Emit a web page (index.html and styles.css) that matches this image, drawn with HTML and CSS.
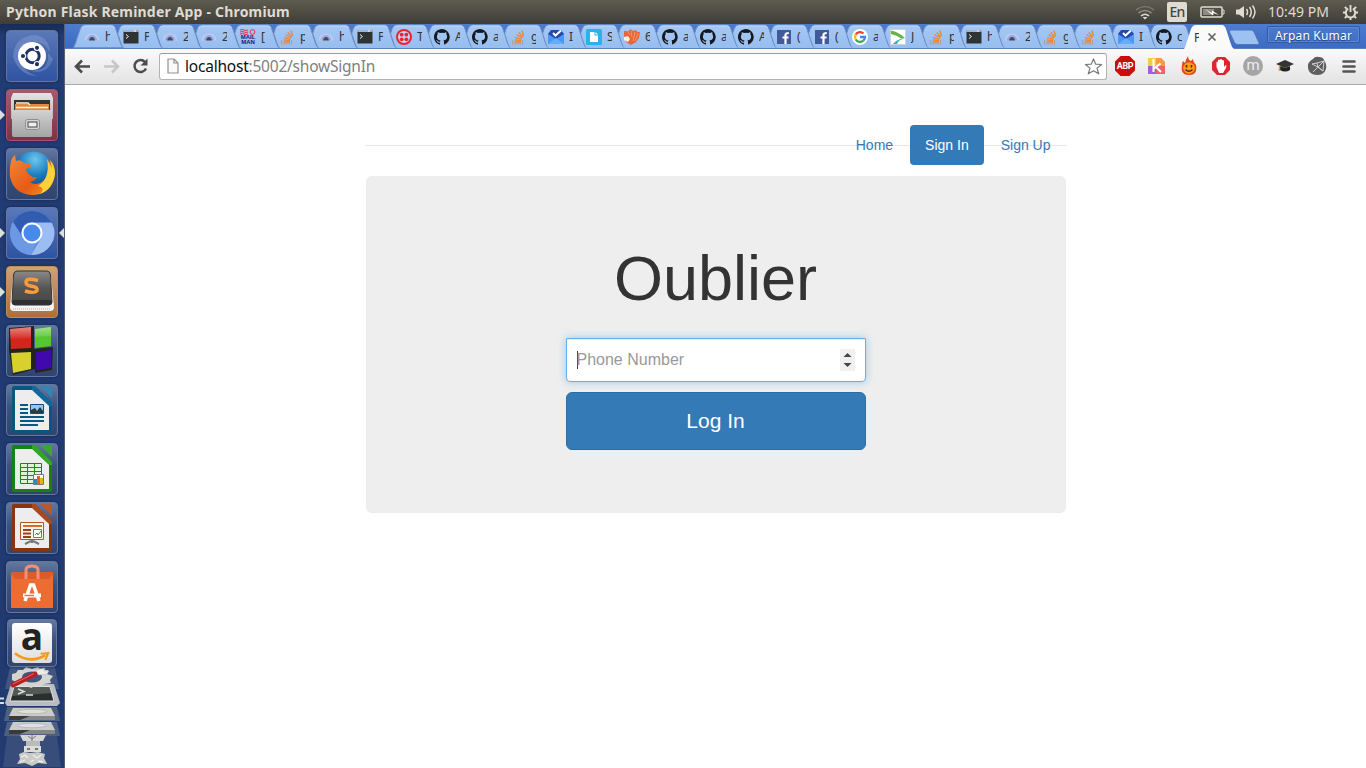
FILE: index.html
```html
<!DOCTYPE html>
<html lang="en">
<head>
<meta charset="utf-8">
<title>Python Flask Reminder App</title>
<link rel="stylesheet" href="styles.css">
</head>
<body>
<svg class="defs" width="0" height="0">
  <defs>
    <linearGradient id="tabfill" gradientUnits="userSpaceOnUse" x1="0" y1="0" x2="0" y2="24"><stop offset="0" stop-color="#a6c8f5"/><stop offset="1" stop-color="#97beef"/></linearGradient>
    <linearGradient id="gloss" x1="0" y1="0" x2="0" y2="1"><stop offset="0" stop-color="#fff" stop-opacity=".45"/><stop offset="1" stop-color="#fff" stop-opacity="0"/></linearGradient>
    <linearGradient id="metal" x1="0" y1="0" x2="0" y2="1"><stop offset="0" stop-color="#d2d2d2"/><stop offset="1" stop-color="#a4a4a4"/></linearGradient>
    <linearGradient id="lid" x1="0" y1="0" x2="0" y2="1"><stop offset="0" stop-color="#e4e4e4"/><stop offset="1" stop-color="#b4b4b4"/></linearGradient>
    <linearGradient id="dark" x1="0" y1="0" x2="0" y2="1"><stop offset="0" stop-color="#8a8a8a"/><stop offset=".5" stop-color="#555"/><stop offset="1" stop-color="#444"/></linearGradient>
    <linearGradient id="fox" x1="0" y1="0" x2="1" y2="1"><stop offset="0" stop-color="#f0883a"/><stop offset=".6" stop-color="#e85a16"/><stop offset="1" stop-color="#f4a31c"/></linearGradient>
    <radialGradient id="globe" cx=".55" cy=".2" r=".8"><stop offset="0" stop-color="#6cc8ee"/><stop offset=".5" stop-color="#1a79bd"/><stop offset="1" stop-color="#123a78"/></radialGradient>
    <symbol id="shape" viewBox="0 0 50 24" preserveAspectRatio="none"><path d="M.5 23.5Q1.500 22 2.500 19L7 5Q8.500 1 12 1H38Q40.500 1 42 5L46.500 19Q47.500 22 49 23.500Z" fill="url(#tabfill)"/><path d="M.5 23.5Q1.500 22 2.500 19L7 5Q8.500 1 12 1H38Q40.500 1 42 5L46.500 19Q47.500 22 49 23.500" fill="none" stroke="#6f8fbd"/><path d="M9 3.500Q10 2 12 2H38Q39.500 2 40.500 4" fill="none" stroke="#bdd7f9"/></symbol>
    <symbol id="next" viewBox="0 0 50 24" preserveAspectRatio="none"><path d="M5.500 10L7 5Q8.500 1 12 1H38Q40.500 1 42 5L46.500 19Q47.500 22 49 23.500V24H11.500Q10 22 9 19L6.300 10.500Z" fill="url(#tabfill)"/><path d="M5.500 10L7 5Q8.500 1 12 1H38Q40.500 1 42 5L46.500 19Q47.500 22 49 23.500" fill="none" stroke="#6f8fbd"/><path d="M9 3.500Q10 2 12 2H38Q39.500 2 40.500 4" fill="none" stroke="#bdd7f9"/></symbol>
    <symbol id="eye" viewBox="0 0 16 16"><path d="M.5 11.500Q1 4.500 8 4.500T15.500 11.500Q8 12.500 .5 11.500Z" fill="#bccaf0"/><path d="M2.500 11.500Q4 6 8 6T13.500 11.500Z" fill="#9aa9d8"/><path d="M5 11.500Q5.500 8 8 8T11 11.500Z" fill="#434b6b"/></symbol>
    <symbol id="term" viewBox="0 0 16 16"><rect x=".5" y="1" width="15" height="13.500" fill="#303334"/><path d="M.5 2H15.500" stroke="#c5d9ea" stroke-width="2"/><path d="M1 2H11" stroke="#6b93c6"/><path d="M13 2H15" stroke="#d24b38"/><path d="M3 5.500L5.500 7.500L3 9.500" fill="none" stroke="#eee"/></symbol>
    <symbol id="stack" viewBox="0 0 16 16"><path d="M2.500 11V15H12.500V11" fill="none" stroke="#a3a5ad" stroke-width="1.200"/><path d="M4.500 13H11M4.700 10.800L11 11.600M5.200 8.300L11.500 10.300M6.600 5.500L12 9M8.800 3.300L12.800 8.100M12 1.500L13.600 7" stroke="#ee8430" stroke-width="1.300"/></symbol>
    <symbol id="github" viewBox="0 0 16 16"><path fill="#15191d" d="M8 0C3.580 0 0 3.580 0 8c0 3.540 2.290 6.530 5.470 7.590.4.070.55-.17.55-.38V13.720c-2.230.48-2.700-1.070-2.700-1.070-.36-.92-.89-1.170-.89-1.170-.73-.5.050-.49.050-.49.810.060 1.230.83 1.230.83.72 1.230 1.880.87 2.330.66.070-.52.280-.87.510-1.070-1.780-.2-3.640-.89-3.640-3.950 0-.87.310-1.590.82-2.150-.08-.2-.36-1.020.080-2.120 0 0 .67-.21 2.200.82a7.600 7.600 0 0 1 4 0c1.530-1.040 2.200-.82 2.200-.82.440 1.100.16 1.920.080 2.120.51.560.82 1.270.82 2.150 0 3.070-1.870 3.750-3.650 3.950.29.250.54.730.54 1.480v2.200c0 .21.15.46.55.38A8 8 0 0 0 8 0Z"/></symbol>
    <symbol id="twilio" viewBox="0 0 16 16"><circle cx="8" cy="8" r="7" fill="#fff" fill-opacity=".35" stroke="#e9232f" stroke-width="2"/><g fill="#e9232f"><circle cx="5.700" cy="5.700" r="1.900"/><circle cx="10.300" cy="5.700" r="1.900"/><circle cx="5.700" cy="10.300" r="1.900"/><circle cx="10.300" cy="10.300" r="1.900"/></g></symbol>
    <symbol id="inbox" viewBox="0 0 16 16"><path d="M0 5L3 1H13L16 5V10H0Z" fill="#234aaa"/><path d="M0 5L8 10L16 5V15H0Z" fill="#4897f4"/><path d="M0 15L8 9L16 15Z" fill="#65adf9"/><path d="M5 4L7.500 6.500L13 1.500" fill="none" stroke="#fff" stroke-width="2"/></symbol>
    <symbol id="page" viewBox="0 0 16 16"><rect width="16" height="16" rx="1.500" fill="#26b4e9"/><path d="M4 3H8.500V6.500H12V13H4Z" fill="#fff"/><path d="M9.500 3L12 5.500H9.500Z" fill="#fff"/></symbol>
    <symbol id="hand" viewBox="0 0 16 16"><path d="M0 2L5 2L6 0L9 2L12 1L13 3L16 3L15 9L12 13L7 16L2 13L0 8Z" fill="#e76739"/><path d="M0 8L4 7L6 10L4 13L0 11Z" fill="#fff0e8"/><path d="M3 2L6 6M7 2L8 8M11 3L9 12M14 4L11 12" stroke="#f5a27c" stroke-width=".8"/></symbol>
    <symbol id="fb" viewBox="0 0 16 16"><rect x="1" y="1" width="14" height="14" fill="#42599a"/><path d="M9.500 15V6Q9.500 4 12.800 4M6.500 8.500H12.500" fill="none" stroke="#fff" stroke-width="2.200"/></symbol>
    <symbol id="google" viewBox="0 0 16 16"><circle cx="8" cy="8" r="8" fill="#fff"/><g fill="none" stroke-width="2.300"><path d="M11.500 4.500A5 5 0 0 0 3.700 5.500" stroke="#ea4335"/><path d="M3.700 5.500A5 5 0 0 0 3.700 10.500" stroke="#fbbc05"/><path d="M3.700 10.500A5 5 0 0 0 11.500 11.500" stroke="#34a853"/><path d="M11.500 11.500Q13 10 13 8H8" stroke="#4285f4"/></g></symbol>
    <symbol id="leaf" viewBox="0 0 16 16"><path d="M.5.5H15.500V15.500H.5Z" fill="#fff" stroke="#cbd3d8"/><path d="M1 1.500Q9 3 15 9L11 9.500Q7 6 1 5Z" fill="#69b541"/><path d="M15 9Q7 10 3 15H7Q8 11 15 9Z" fill="#31aeb9"/></symbol>
  </defs>
</svg>

<header class="panel">
  <div class="panel-title">Python Flask Reminder App - Chromium</div>
  <div class="indicators">
    <svg width="20" height="16" viewBox="0 0 20 16" fill="none" stroke="#aaa79f" stroke-width="1.600"><path d="M1 6Q10-1 19 6" stroke="#77756e"/><path d="M3.500 9Q10 4 16.500 9" stroke="#8f8d85"/><path d="M6 12Q10 8.500 14 12" stroke="#dfdbd2"/><path d="M7.500 13H12.500L10 15.500Z" fill="#dfdbd2" stroke="none"/></svg>
    <span class="lang">En</span>
    <svg width="25" height="14" viewBox="0 0 25 14"><rect x="1" y="2" width="21" height="10" rx="1" fill="none" stroke="#dfdbd2" stroke-width="1.500"/><path d="M22.500 5H24V9H22.500" fill="none" stroke="#dfdbd2"/><path d="M3 4H14V10H3Z" fill="#8d8b83"/><path d="M5 4L12 8V5.500L19 10L13 8V10.500Z" fill="#fff"/></svg>
    <svg class="sound" width="20" height="16" viewBox="0 0 20 16" fill="none" stroke="#dfdbd2" stroke-width="1.500"><path d="M0 5.500H3L8 2V14L3 10.500H0Z" fill="#dfdbd2" stroke="none"/><path d="M10.500 5Q12.500 8 10.500 11M13.500 3Q17 8 13.500 13M16.500 1.500Q21.500 8 16.500 14.500"/></svg>
    <span class="clock">10:49 PM</span>
    <svg class="gear" width="17" height="17" viewBox="0 0 18 18" fill="none" stroke="#dfdbd2"><path d="M6.500 5A5 5 0 1 0 11.500 5" stroke-width="2.200"/><path d="M9 1V8.500" stroke-width="2"/><path d="M9 14V17M1 9H4M14 9H17M3 15L5 13M13 13L15 15M3 3L5 5M13 5L15 3" stroke-width="2"/></svg>
  </div>
</header>

<div class="desktop">
<nav class="launcher">
  <div class="tile ubuntu"><svg viewBox="0 0 52 52"><path d="M7 27Q8 7 28 5Q43 6 44 23Q39 10 24 12Q14 16 15 29Q17 42 31 46Q13 45 7 27Z" fill="#8ba0d2" opacity=".45"/><path d="M47 29Q40 47 23 40Q44 43 42 23Z" fill="#8ba0d2" opacity=".4"/><circle cx="26" cy="26" r="14" fill="#fff"/><circle cx="26.500" cy="26" r="6.700" fill="none" stroke="#203361" stroke-width="3"/><g fill="#203361" stroke="#fff" stroke-width="1.200"><circle cx="17" cy="26" r="2.700"/><circle cx="31" cy="17.800" r="2.700"/><circle cx="31" cy="34.200" r="2.700"/></g></svg></div>
  <div class="tile files has-left"><svg viewBox="0 0 52 52"><path d="M7 4H45L47 9V30H5V9Z" fill="url(#lid)"/><path d="M8 11H44V23H8Z" fill="#343434"/><path d="M9 15H43V23H9Z" fill="#df8b3f"/><path d="M10 14H22L24 16M10 18.500H42" fill="none" stroke="#fff3d8" stroke-width="1.300"/><path d="M6 21H46V46Q46 48 44 48H8Q6 48 6 46Z" fill="url(#metal)"/><rect x="19.500" y="30.500" width="14" height="10" rx="2" fill="#d5d5d5" stroke="#8d8d8d"/><rect x="22" y="33" width="9" height="5" fill="#eee" stroke="#444"/></svg></div>
  <div class="tile"><svg viewBox="0 0 52 52"><circle cx="27" cy="24" r="20.500" fill="url(#globe)"/><path d="M6 10L9 7L10 13Q15 11 18 15L25 16L24 19L20 21Q21 26 27 29H31Q29 33 24 34Q29 38 36 34Q42 30 43 22Q44 18 42 12Q51 18 48 31Q43 47 26 47Q8 46 4 29Q3 18 6 10Z" fill="url(#fox)"/><path d="M41 11Q43 21 40 29Q37 35 32 38Q40 40 34 46Q47 41 49 26Q49 17 44 12L46 20Z" fill="#fbd13a"/></svg></div>
  <div class="tile chromium has-left has-right"><svg viewBox="0 0 52 52"><circle cx="26" cy="26" r="22" fill="#5d8be1"/><path d="M7 15A22 22 0 0 1 45 15H26Q16 15 15 27Z" fill="#325caf"/><path d="M26 16H46A22 22 0 0 1 25 48L36 30Z" fill="#9bbdf3"/><path d="M7 15L19 35Q26 36 31 35L25 48A22 22 0 0 1 7 15Z" fill="#6c98e5"/><circle cx="26" cy="26" r="9.500" fill="#4889ee" stroke="#fff" stroke-width="2"/></svg></div>
  <div class="tile sublime has-left"><svg viewBox="0 0 52 52"><path d="M7 10L4 41Q4 45 8 45H44Q48 45 48 41L45 10Z" fill="#f5f5f5"/><path d="M7 43H45" stroke="#aaa" stroke-dasharray="1 1"/><path d="M11 5H41Q44 5 44.500 9L46 36Q46 39 43 39H9Q6 39 6 36L7.500 9Q8 5 11 5Z" fill="url(#dark)" stroke="#333"/><path d="M6.500 34H45.500V36Q45.500 39 43 39H9Q6.500 39 6.500 36Z" fill="#303030"/><path d="M32 14.500Q20 11 20 16.500Q20 19.500 27 20.500Q32 21.500 31 24.500Q29 28 19 25" fill="none" stroke="#ff9a38" stroke-width="3.500"/></svg></div>
  <div class="tile"><svg viewBox="0 0 52 52"><path d="M3 3L28 1V24L47 22L46 45L29 48V44L7 50L3 26Z" fill="#22251e"/><path d="M4 4L25 2V23L5 24Z" fill="#d4241c"/><path d="M29 4L45 2V21L29 23Z" fill="#55c62f"/><path d="M5 28L25 27V44L7 48Z" fill="#d8d02b"/><path d="M30 27L45 25V43L30 45Z" fill="#4109ad"/><path d="M4 4L25 2V13L4 15ZM29 4L45 2V11L29 12Z" fill="url(#gloss)"/></svg></div>
  <div class="tile"><svg viewBox="0 0 52 52"><path d="M6 4Q6 2 8 2H29L46 19V47Q46 49 44 49H8Q6 49 6 47Z" fill="#09567f"/><path d="M9 6H27L43 21V46H9Z" fill="#ededed"/><path d="M34 2H46V14Z" fill="#3185b0"/><path d="M26 6V2H29L46 19V22H43Z" fill="#126896"/><path d="M14 21H22M14 25H22M14 29H22M14 33H38M14 37H38M14 41H32" stroke="#095981" stroke-width="2"/><path d="M24.500 20.500H37.500V29.500H24.500Z" fill="#8dcaf0" stroke="#134d77"/><path d="M25 29V26L29 24L31 27L34 23L37 27V29Z" fill="#263c3f"/></svg></div>
  <div class="tile"><svg viewBox="0 0 52 52"><path d="M6 4Q6 2 8 2H29L46 19V47Q46 49 44 49H8Q6 49 6 47Z" fill="#168212"/><path d="M9 6H27L43 21V46H9Z" fill="#ededed"/><path d="M34 2H46V14Z" fill="#39a92e"/><path d="M26 6V2H29L46 19V22H43Z" fill="#31a724"/><path d="M14.500 20.500H35.500V40.500H14.500Z" fill="#e0f4d9" stroke="#118817"/><path d="M14 24.500H35M14 28.500H35M14 32.500H35M14 36.500H35M21.500 21V40M28.500 21V40" stroke="#178d19"/><path d="M27.500 31.500H37.500V41.500H27.500Z" fill="#fff" stroke="#777"/><path d="M28 36H31V41H28Z" fill="#278cc0"/><path d="M31 33H34V41H31Z" fill="#e66021"/><path d="M34 35H37V41H34Z" fill="#e7b11e"/></svg></div>
  <div class="tile"><svg viewBox="0 0 52 52"><path d="M6 4Q6 2 8 2H29L46 19V47Q46 49 44 49H8Q6 49 6 47Z" fill="#8b3510"/><path d="M9 6H27L43 21V46H9Z" fill="#ededed"/><path d="M34 2H46V14Z" fill="#b7592b"/><path d="M26 6V2H29L46 19V22H43Z" fill="#a94a1d"/><path d="M14.500 20.500H37.500V37.500H14.500Z" fill="#fff6e9" stroke="#b75520"/><path d="M17 24H36" stroke="#d46b31" stroke-width="2"/><path d="M17 28H25M17 31.500H25M17 35H25" stroke="#9c421a" stroke-width="1.800"/><path d="M27.500 27.500H35.500V35.500H27.500Z" fill="#fff" stroke="#777"/><path d="M29 33L31 31L32 33L35 29" fill="none" stroke="#32a12c"/><path d="M26 38V41M19 42L25 39M33 42L27 39" stroke="#777" stroke-width="2"/></svg></div>
  <div class="tile"><svg viewBox="0 0 52 52"><path d="M20 17V9Q20 5 26 5T32 9V17" fill="none" stroke="#f2906f" stroke-width="3"/><path d="M5 11H47V47H5Z" fill="#ed6c31"/><path d="M5 11H47V13L43 18H9L5 13Z" fill="#d95c2c"/><path d="M20 18V11M32 18V11" stroke="#f2906f" stroke-width="3"/><path d="M19 40L24.500 24H27.500L33 40" fill="none" stroke="#fff" stroke-width="3.500"/><path d="M17 34.500H35" stroke="#fff" stroke-width="4"/><path d="M18.500 34.500H28" stroke="#ec773d" stroke-width="1.500"/></svg></div>
  <div class="tile amazon"><div class="amazon-face"><span>a</span><svg viewBox="0 0 40 12"><path d="M2 2Q18 14 34 4" fill="none" stroke="#f39a1b" stroke-width="2.800"/><path d="M29 2.500L37 2L34 9" fill="none" stroke="#f39a1b" stroke-width="2.200"/></svg></div></div>
  <svg class="stacked" width="64" height="102" viewBox="0 0 64 102">
    <path d="M10 2H55L59 24H5Z" fill="#728099" opacity=".4"/>
    <path d="M11 19H54L60 38L57 41H7L5 38Z" fill="#b9bcc0"/><path d="M14 21.500H50L54 36H10Z" fill="#27302e" stroke="#e2e2e2"/><path d="M14 22H50L52 28L12 31Z" fill="#fff" opacity=".2"/><path d="M18 24L24 26.500L18 29M26 30H33" fill="none" stroke="#ddd" stroke-width="1.500"/>
    <path fill-rule="evenodd" d="M12 9L16 8L18 5L23 5L26 2L32 4L38 2L41 5L48 5L47 9L53 11L50 15L51 18L44 19L42 22L35 21L31 23L27 21L18 21L16 17L12 15ZM22 12A10 5.500 0 1 0 42 12A10 5.500 0 1 0 22 12Z" fill="#d4d4d0"/><path d="M34 8L39 4L45 3L44 6L49 6L47 9L39 10Z" fill="#ececea" stroke="#b5b5b2" stroke-width=".5"/><path d="M13 20L35 9" stroke="#b81f24" stroke-width="5" stroke-linecap="round"/><path d="M13 19L34 8.500" stroke="#e06a66"/>
    <path d="M7 42H57L60 56H4Z" fill="#63718a" opacity=".7"/><path d="M13 43H51L55 51H9Z" fill="#cbccca"/><ellipse cx="32" cy="46.500" rx="15" ry="2.300" fill="#dededc" stroke="#aaa" stroke-width=".7"/><path d="M9 51H55V55H9Z" fill="#383a3b"/><path d="M20 55L30 51H55V55Z" fill="#858688"/>
    <path d="M7 57H57L60 71H4Z" fill="#63718a" opacity=".7"/><path d="M13 57H51L55 65H9Z" fill="#cbccca"/><ellipse cx="32" cy="60.500" rx="15" ry="2.300" fill="#dededc" stroke="#aaa" stroke-width=".7"/><path d="M9 65H55V69H9Z" fill="#383a3b"/><path d="M20 69L30 65H55V69Z" fill="#858688"/>
    <path d="M7 71H57L61 102H3Z" fill="#64738c" opacity=".35"/><path d="M20 70H46L43 76H23Z" fill="#d4d5d4"/><path d="M32 70V76M28 71L32 74L36 71" fill="none" stroke="#777"/><path d="M26 76H40V81H26Z" fill="#b9bcbd"/><path d="M24 81H41V87H24Z" fill="#dcdddb"/><path d="M27 84H30M35 84H38" stroke="#555" stroke-width="1.500"/><path d="M19 89L24 87L30 88L38 87L45 89L44 93L47 99L38 98L32 101L25 98L17 99L20 94Z" fill="#c9cbc7"/><path d="M21 92L25 90L28 93M33 90L37 93L41 90M20 97L25 95M30 97L34 95M38 96L43 97" fill="none" stroke="#f0f0e9" stroke-width="1.300"/>
    <path d="M0 33.500H4M0 38H4" stroke="#ddd" stroke-width="2"/>
  </svg>
</nav>

<main class="browser">
  <div class="tabs">
    <div class="tab wide"><svg class="bg"><use href="#shape"/></svg><svg class="fav"><use href="#eye"/></svg><span>h</span></div>
    <div class="tab wide"><svg class="bg"><use href="#next"/></svg><svg class="fav"><use href="#term"/></svg><span>P</span></div>
    <div class="tab wide"><svg class="bg"><use href="#next"/></svg><svg class="fav"><use href="#eye"/></svg><span>2</span></div>
    <div class="tab wide"><svg class="bg"><use href="#next"/></svg><svg class="fav"><use href="#eye"/></svg><span>2</span></div>
    <div class="tab wide"><svg class="bg"><use href="#next"/></svg><div class="mail"><svg width="16" height="6" viewBox="0 0 16 6" fill="none" stroke="#ed3345"><path d="M0 1Q2 0 4 1T8 1M0 3Q2 2 4 3T8 3M0 5Q2 4 4 5T8 5"/><circle cx="12.500" cy="3" r="2.400"/></svg><b>MAIL</b><b>MAN</b></div><span>[</span></div>
    <div class="tab wide"><svg class="bg"><use href="#next"/></svg><svg class="fav"><use href="#stack"/></svg><span>p</span></div>
    <div class="tab wide"><svg class="bg"><use href="#next"/></svg><svg class="fav"><use href="#eye"/></svg><span>h</span></div>
    <div class="tab wide"><svg class="bg"><use href="#next"/></svg><svg class="fav"><use href="#term"/></svg><span>P</span></div>
    <div class="tab"><svg class="bg"><use href="#next"/></svg><svg class="fav"><use href="#twilio"/></svg><span>T</span></div>
    <div class="tab"><svg class="bg"><use href="#next"/></svg><svg class="fav"><use href="#github"/></svg><span>A</span></div>
    <div class="tab"><svg class="bg"><use href="#next"/></svg><svg class="fav"><use href="#github"/></svg><span>a</span></div>
    <div class="tab"><svg class="bg"><use href="#next"/></svg><svg class="fav"><use href="#stack"/></svg><span>g</span></div>
    <div class="tab"><svg class="bg"><use href="#next"/></svg><svg class="fav"><use href="#inbox"/></svg><span>I</span></div>
    <div class="tab"><svg class="bg"><use href="#next"/></svg><svg class="fav"><use href="#page"/></svg><span>S</span></div>
    <div class="tab"><svg class="bg"><use href="#next"/></svg><svg class="fav"><use href="#hand"/></svg><span>6</span></div>
    <div class="tab"><svg class="bg"><use href="#next"/></svg><svg class="fav"><use href="#github"/></svg><span>a</span></div>
    <div class="tab"><svg class="bg"><use href="#next"/></svg><svg class="fav"><use href="#github"/></svg><span>a</span></div>
    <div class="tab"><svg class="bg"><use href="#next"/></svg><svg class="fav"><use href="#github"/></svg><span>A</span></div>
    <div class="tab"><svg class="bg"><use href="#next"/></svg><svg class="fav"><use href="#fb"/></svg><span>(</span></div>
    <div class="tab"><svg class="bg"><use href="#next"/></svg><svg class="fav"><use href="#fb"/></svg><span>(</span></div>
    <div class="tab"><svg class="bg"><use href="#next"/></svg><svg class="fav"><use href="#google"/></svg><span>a</span></div>
    <div class="tab"><svg class="bg"><use href="#next"/></svg><svg class="fav"><use href="#leaf"/></svg><span>J</span></div>
    <div class="tab"><svg class="bg"><use href="#next"/></svg><svg class="fav"><use href="#stack"/></svg><span>p</span></div>
    <div class="tab"><svg class="bg"><use href="#next"/></svg><svg class="fav"><use href="#term"/></svg><span>h</span></div>
    <div class="tab"><svg class="bg"><use href="#next"/></svg><svg class="fav"><use href="#eye"/></svg><span>2</span></div>
    <div class="tab"><svg class="bg"><use href="#next"/></svg><svg class="fav"><use href="#stack"/></svg><span>g</span></div>
    <div class="tab"><svg class="bg"><use href="#next"/></svg><svg class="fav"><use href="#stack"/></svg><span>g</span></div>
    <div class="tab"><svg class="bg"><use href="#next"/></svg><svg class="fav"><use href="#inbox"/></svg><span>I</span></div>
    <div class="tab"><svg class="bg"><use href="#next"/></svg><svg class="fav"><use href="#github"/></svg><span>c</span></div>
    <div class="tab active"><svg class="bg" viewBox="0 0 50 25" preserveAspectRatio="none"><path d="M0 25Q1.500 23 2.500 19L7 5Q8.500 1 12 1H38Q40.500 1 42 5L46.500 19Q47.500 23 50 25Z" fill="#fafafa"/></svg><span>P</span><svg class="close" viewBox="0 0 10 10"><path d="M1.500 1.500L8.500 8.500M8.500 1.500L1.500 8.500" stroke="#666" stroke-width="1.700"/></svg></div>
    <svg class="newtab" width="34" height="17" viewBox="0 0 34 17"><path d="M3 1H23Q25 1 26 3L31 14Q31.500 15.500 29.500 15.500H10Q7.500 15.500 6.500 13.500L1.500 3Q1 1 3 1Z" fill="#9cc2f2" stroke="#5279b7"/></svg>
    <div class="profile">Arpan Kumar</div>
  </div>
  <div class="toolbar">
    <svg class="nav-icon" width="18" height="16" viewBox="0 0 18 16" fill="none" stroke="#4c4c4c" stroke-width="2.600"><path d="M17 8.500H4M9 2.500L3 8.500L9 14.500"/></svg>
    <svg class="nav-icon" width="18" height="16" viewBox="0 0 18 16" fill="none" stroke="#c7c7c7" stroke-width="2.600"><path d="M2 8.500H15M10 2.500L16 8.500L10 14.500"/></svg>
    <svg class="nav-icon" width="18" height="18" viewBox="0 0 18 18" fill="none" stroke="#4c4c4c" stroke-width="2.500"><path d="M14 5A6 6 0 1 0 15 11.500"/><path d="M16.500 1.500V8.500H9.500Z" fill="#4c4c4c" stroke="none"/></svg>
    <div class="address"><svg width="12" height="16" viewBox="0 0 12 16"><path d="M1 1H7L11 5V15H1ZM7 1V5H11" fill="#fafafa" stroke="#929292" stroke-width="1.200"/></svg><span class="url"><b>localhost</b>:5002/showSignIn</span><svg class="star" width="19" height="19" viewBox="0 0 20 19"><path d="M10 1.500L12.300 7L18.500 7.400L13.700 11.200L15.500 17.200L10 14L4.500 17.200L6.300 11.200L1.500 7.400L7.700 7Z" fill="#fff" stroke="#777" stroke-width="1.300" stroke-linejoin="round"/></svg></div>
    <div class="extensions">
      <span class="abp">ABP</span>
      <svg viewBox="0 0 20 20"><path d="M1 2H14L18 6V18H1Z" fill="#f3c23d"/><path d="M1 2H9V10H1Z" fill="#efd03c"/><path d="M1 10H9V18H1Z" fill="#a45fd0"/><path d="M9 10H18V18H9Z" fill="#f0606e"/><path d="M9 2H14L18 6V10H9Z" fill="#fa9a45"/><path d="M6.500 3V16M13.500 7.500L7 12.500M9 11L14 16" fill="none" stroke="#fff" stroke-width="2"/></svg>
      <svg viewBox="0 0 20 20"><path d="M9 0Q9 4 12 5L14 3Q14 6 17 9Q19 19 10 19Q1 19 3 9Q3 7 4 5L6 7Q7 3 9 0Z" fill="#e0481c"/><circle cx="10" cy="12" r="5.800" fill="#ff9b20"/><path d="M7.500 9V11.500M12.500 9V11.500M6.500 13.500Q10 17 13.500 13.500" fill="none" stroke="#572615" stroke-width="1.500"/></svg>
      <svg viewBox="0 0 20 20"><path d="M6 1H14L19 6V14L14 19H6L1 14V6Z" fill="#e1242d"/><path d="M5.500 11V6Q6 5 7 6V10V4Q8 3 9 4V9V3.500Q10 2.500 11 3.500V9V4.500Q12 3.500 13 5V11L14.500 9Q16 9 15 12L12 17H8Z" fill="#fff"/></svg>
      <span class="m">m</span>
      <svg viewBox="0 0 20 20"><path d="M1 8L10 4L19 8L10 12Z" fill="#343434"/><path d="M5 10V14Q10 17 15 14V10L10 12Z" fill="#222"/><path d="M4.500 9.500V15" fill="none" stroke="#dea41c" stroke-width="1.500"/></svg>
      <svg viewBox="0 0 20 20"><path d="M6 3Q8 0 12 1Q16 1 17 4Q20 8 19 13Q17 19 10 19Q2 19 1 12Q0 6 6 3Z" fill="#5e5e5e"/><path d="M5 8L10 7L17 5L16 15L11 11L6 16M5 8L11 11L17 5M10 7L11 11L16 15" fill="none" stroke="#ddd" stroke-width=".9"/></svg>
      <svg class="burger" viewBox="0 0 14 16"><path d="M1.500 3.500H12.500M1.500 8.500H12.500M1.500 13.500H12.500" stroke="#555" stroke-width="2.600" stroke-linecap="round"/></svg>
    </div>
  </div>
  <section class="viewport">
    <div class="container">
      <div class="site-nav"><a href="#">Home</a><a class="current" href="#">Sign In</a><a href="#">Sign Up</a></div>
      <div class="jumbotron">
        <h1>Oublier</h1>
        <div class="phone"><span class="caret"></span><span class="placeholder">Phone Number</span><span class="spinner"><svg width="15" height="22" viewBox="0 0 15 22"><path d="M3.500 8L7.500 4L11.500 8ZM3.500 14L7.500 18L11.500 14Z" fill="#444"/></svg></span></div>
        <button class="login">Log In</button>
      </div>
    </div>
  </section>
</main>
</div>
</body>
</html>
```

FILE: styles.css
```css
* { box-sizing: border-box; }
body { margin: 0; width: 1366px; height: 768px; overflow: hidden; background: #fff; font-family: "Liberation Sans", Arial, sans-serif; }
svg { display: block; flex: none; }
.defs { position: absolute; }

.panel { height: 24px; display: flex; justify-content: space-between; align-items: center; padding: 0 7px 0 6px; background: linear-gradient(#5e5b50, #555248 30%, #3e3d38); color: #dfdbd2; font-family: "Noto Sans", sans-serif; }
.panel-title { font-size: 14px; font-weight: 700; line-height: 24px; letter-spacing: .19px; white-space: nowrap; }
.indicators { display: flex; align-items: center; height: 24px; }
.lang { width: 20px; height: 20px; margin: 0 13px 0 12px; background: #dfdbd2; color: #454440; font-size: 14px; font-weight: 500; line-height: 20px; text-align: center; border-radius: 2px; letter-spacing: -.7px; }
.sound { margin-left: 11px; }
.clock { width: 62px; height: 24px; margin: 0 12px 0 12px; font-size: 14px; line-height: 23px; letter-spacing: .05px; white-space: nowrap; }

.desktop { display: flex; height: 744px; }
.launcher { width: 65px; height: 744px; padding: 6px 0 0; display: flex; flex-direction: column; align-items: center; gap: 7px; background: linear-gradient(#172b57, #213b74 12px, #213a70); border-right: 1px solid #566078; overflow: hidden; }
.tile { position: relative; flex: none; width: 52px; height: 52px; border: 1px solid #64779f; border-radius: 4px; background: linear-gradient(#63779f, #3b5180 45%, #30446e); box-shadow: 0 0 3px #14254b; }
.tile > svg { width: 52px; height: 52px; margin: -1px; }
.ubuntu, .chromium { background: linear-gradient(#5b78b8, #2f53a2); }
.files { background: linear-gradient(#a35b6d, #7d3347); border-color: #a85568; }
.sublime { background: linear-gradient(#d1a177, #a8703b); border-color: #c18c5e; }
.has-left::before { content: ""; position: absolute; left: -7px; top: 20px; border: 5px solid transparent; border-left-color: #dedede; border-right-width: 0; }
.has-right::after { content: ""; position: absolute; right: -7px; top: 20px; border: 5px solid transparent; border-right-color: #dedede; border-left-width: 0; }
.amazon { width: 50px; height: 48px; margin-top: -1px; display: flex; justify-content: center; padding-top: 3px; }
.amazon-face { width: 40px; height: 40px; border-radius: 3px; background: linear-gradient(#fff, #dedede); display: flex; flex-direction: column; align-items: center; justify-content: flex-end; }
.amazon-face span { color: #222; font: 700 37px/36px "Open Sans", sans-serif; height: 36px; margin-top: -8px; }
.amazon-face svg { width: 38px; height: 12px; margin-top: -3px; }
.stacked { margin-top: -9px; }

.browser { width: 1301px; }
.tabs { height: 25px; display: flex; padding: 0 0 0 8px; background: linear-gradient(#4c7bcf, #3d6bc4); border-bottom: 1px solid #5d82b7; isolation: isolate; }
.tab { position: relative; flex: none; width: 38px; height: 24px; display: flex; align-items: center; padding: 1px 0 0 11px; }
.wide { width: 39px; }
.tab > .bg { position: absolute; left: 0; top: 0; width: 50px; height: 24px; z-index: -1; }
.wide > .bg { width: 51px; }
.fav { width: 16px; height: 16px; }
.tab span { width: 5px; height: 17px; margin-left: 5px; overflow: hidden; color: #333; font: 12px/17px "Noto Sans", sans-serif; flex: none; }
.mail { flex: none; width: 16px; }
.mail b { display: block; color: #15187c; font: 700 6px/5px "Liberation Sans", sans-serif; text-align: center; }
.active { height: 25px; padding-left: 11px; width: 45px; z-index: 2; }
.tab.active > .bg { left: 1px; height: 25px; }
.tab.active span { margin-left: 0; width: 5px; }
.close { width: 10px; height: 10px; margin-left: 8px; }
.newtab { margin: 5px 0 0 0; }
.profile { width: 93px; height: 17px; margin: 2px 0 0 5px; border: 1px solid #345999; border-radius: 2px; box-shadow: inset 0 0 0 1px #5d8ad8; color: #fff; font: 12px/17px "Noto Sans", sans-serif; letter-spacing: .2px; text-align: center; text-shadow: 0 1px 1px #1b376f; white-space: nowrap; }
.toolbar { height: 36px; padding: 4px 8px 5px; display: flex; align-items: center; background: linear-gradient(#fafafa, #e3e3e3); border-bottom: 1px solid #aaa; }
.nav-icon { margin-right: 11px; }
.nav-icon:nth-child(3) { margin-right: 10px; }
.address { flex: none; width: 948px; height: 27px; display: flex; align-items: center; padding: 0 3px 0 7px; border: 1px solid #b3b3b3; border-top-color: #9d9d9d; border-radius: 3px; background: #fff; }
.url { margin-left: 6px; font: 15.500px/24px "Noto Sans", sans-serif; letter-spacing: -.22px; color: #808080; white-space: nowrap; }
.url b { color: #111; font-weight: 400; }
.star { margin-left: auto; }
.extensions { display: flex; align-items: center; gap: 12px; margin-left: 8px; }
.extensions svg, .extensions > span { width: 20px; height: 20px; flex: none; }
.abp { background: #c90c0c; clip-path: polygon(28% 0,72% 0,100% 28%,100% 72%,72% 100%,28% 100%,0 72%,0 28%); color: #fff; font: 700 9px/20px Roboto, sans-serif; letter-spacing: -.4px; text-align: center; }
.m { border-radius: 50%; background: #a5a5a5; color: #eee; font: 15px/18px Roboto, sans-serif; text-align: center; }
.extensions .burger { width: 14px; height: 16px; margin-left: 3px; }
.viewport { padding-top: 40px; }
.container { width: 700px; margin: 0 auto; }
.site-nav { height: 40px; display: flex; justify-content: flex-end; gap: 2px; margin-bottom: 11px; background: linear-gradient(#e5e5e5, #e5e5e5) 0 20px/100% 1px no-repeat; font-size: 14px; line-height: 20px; }
.site-nav a { padding: 10px 15px; border-radius: 4px; color: #337ab7; text-decoration: none; }
.site-nav .current { color: #fff; background: #337ab7; }
.jumbotron { height: 337px; padding: 68px 200px 0; border-radius: 6px; background: #eee; text-align: center; }
.jumbotron h1 { margin: 0 0 25px; color: #333; font-size: 63px; font-weight: 500; line-height: 69px; }
.phone { width: 300px; height: 44px; padding: 10px; display: flex; align-items: center; border: 1px solid #66afe9; border-radius: 1px 1px 4px 4px; background: #fff; box-shadow: inset 0 1px 1px rgba(0,0,0,.075), 0 0 8px rgba(102,175,233,.6); font-size: 16px; color: #999; text-align: left; }
.caret { width: 1px; height: 18px; margin-right: -1px; background: #444; }
.spinner { margin-left: auto; background: #f0f0f0; }
.login { display: block; width: 300px; height: 58px; margin: 10px 0 0; padding: 0; border: 1px solid #2e6da4; border-radius: 6px; color: #fff; background: #337ab7; font: 21px/28px "Liberation Sans", sans-serif; }
```
